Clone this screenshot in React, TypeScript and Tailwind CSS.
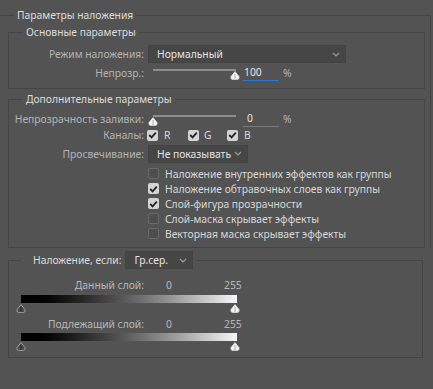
import React from "react";

const Chevron = () => (
  <svg width="8" height="5" viewBox="0 0 8 5" className="shrink-0">
    <path d="M1 1 L4 4 L7 1" stroke="#9a9a9a" strokeWidth="1.2" fill="none" />
  </svg>
);

const Select = ({ value, className }: { value: string; className: string }) => (
  <div
    className={`h-[18px] flex items-center justify-between bg-[#464646] border border-[#434343] pl-[8px] pr-[5px] text-[#e4e4e4] whitespace-nowrap ${className}`}
  >
    <span>{value}</span>
    <Chevron />
  </div>
);

const Thumb = ({ dark = false }: { dark?: boolean }) => (
  <svg width="10" height="9" viewBox="0 0 10 9">
    <path
      d="M5 0.6 L9 5.6 Q9.6 8.4 7.4 8.4 L2.6 8.4 Q0.4 8.4 1 5.6 Z"
      fill={dark ? "#4a4a4a" : "#f4f4f4"}
      stroke={dark ? "#b4b4b4" : "#e0e0e0"}
      strokeWidth="0.8"
    />
    <line x1="5" y1="3" x2="5" y2="8" stroke={dark ? "#1e1e1e" : "#9a9a9a"} strokeWidth="0.8" />
  </svg>
);

const Check = ({ checked }: { checked: boolean }) =>
  checked ? (
    <span className="w-[11px] h-[11px] shrink-0 rounded-[2px] bg-[#d4d4d4] flex items-center justify-center">
      <svg width="9" height="8" viewBox="0 0 9 8">
        <path d="M1.2 4 L3.6 6.4 L7.8 1.6" stroke="#262626" strokeWidth="1.8" fill="none" />
      </svg>
    </span>
  ) : (
    <span className="w-[11px] h-[11px] shrink-0 rounded-[2px] border border-[#6a6a6a] bg-[#4e4e4e]" />
  );

const SliderRow = ({
  label,
  value,
  thumbLeft,
  active,
  className,
}: {
  label: string;
  value: string;
  thumbLeft: string;
  active?: boolean;
  className: string;
}) => (
  <div className={`flex items-center h-[16px] ${className}`}>
    <span className="w-[135px] text-right text-[#b4b4b4] whitespace-nowrap">{label}</span>
    <div className="relative ml-[9px] w-[83px] h-[16px]">
      <div className="absolute top-[4px] left-0 right-0 h-[2px] bg-[#8c8c8c]" />
      <div className={`absolute top-[6px] ${thumbLeft} flex`}>
        <Thumb />
      </div>
    </div>
    <div
      className={`ml-[7px] w-[36px] h-[16px] border-b ${
        active ? "border-[#2a78d6] pl-[1px]" : "border-[#7a7a7a] pl-[4px]"
      } text-[#e4e4e4] leading-[15px]`}
    >
      {value}
    </div>
    <span className="ml-[4px] text-[#b4b4b4]">%</span>
  </div>
);

const GradientBar = ({ className }: { className: string }) => (
  <div className={`ml-[11px] w-[218px] ${className}`}>
    <div className="h-[10px] border border-[#555] bg-gradient-to-r from-black to-[#f6f6f6]" />
    <div className="flex justify-between mx-[-4px] h-[9px]">
      <Thumb dark />
      <div className="mr-[2px] flex">
        <Thumb />
      </div>
    </div>
  </div>
);

const options: { label: string; checked: boolean }[] = [
  { label: "Наложение внутренних эффектов как группы", checked: false },
  { label: "Наложение обтравочных слоев как группы", checked: true },
  { label: "Слой-фигура прозрачности", checked: true },
  { label: "Слой-маска скрывает эффекты", checked: false },
  { label: "Векторная маска скрывает эффекты", checked: false },
];

export default function App() {
  return (
    <div
      className="w-[433px] h-[389px] bg-[#535353] overflow-hidden text-[10.3px] leading-[16px] text-[#d8d8d8]"
      style={{ fontFamily: '"Noto Sans", "Open Sans", sans-serif' }}
    >
      <fieldset className="mt-[7px] w-[431px] border-t border-r border-[#454545]">
        <legend className="ml-[14px] px-[3px] text-[#dcdcdc]">Параметры наложения</legend>

        <fieldset className="mt-[1px] ml-[8px] w-[417px] border border-[#454545]">
          <legend className="ml-[14px] px-[3px] text-[#dcdcdc]">Основные параметры</legend>
          <div className="pt-[5px] pb-[7px]">
            <div className="flex items-center h-[18px]">
              <span className="w-[135px] text-right text-[#b4b4b4]">Режим наложения:</span>
              <Select className="ml-[4px] w-[198px]" value="Нормальный" />
            </div>
            <SliderRow className="mt-[2px]" label="Непрозр.:" value="100" thumbLeft="left-[77px]" active />
          </div>
        </fieldset>

        <fieldset className="mt-[2px] ml-[8px] w-[417px] border border-[#454545]">
          <legend className="ml-[14px] px-[3px] text-[#dcdcdc]">Дополнительные параметры</legend>
          <div className="pt-[4px] pb-[6px]">
            <SliderRow className="" label="Непрозрачность заливки:" value="0" thumbLeft="left-[-5px]" />
            <div className="flex items-center h-[16px]">
              <span className="w-[135px] text-right text-[#b4b4b4]">Каналы:</span>
              <div className="ml-[3px] flex items-center">
                <Check checked />
                <span className="ml-[6px] w-[24px] text-[#d8d8d8]">R</span>
                <Check checked />
                <span className="ml-[5px] w-[23px] text-[#d8d8d8]">G</span>
                <Check checked />
                <span className="ml-[6px] text-[#d8d8d8]">B</span>
              </div>
            </div>
            <div className="mt-[2px] flex items-center h-[17px]">
              <span className="w-[135px] text-right text-[#b4b4b4]">Просвечивание:</span>
              <Select className="ml-[4px] w-[100px] h-[17px]" value="Не показывать" />
            </div>
            <div className="mt-[4px] ml-[139px] flex flex-col">
              {options.map((o) => (
                <div key={o.label} className="flex items-center h-[15px]">
                  <Check checked={o.checked} />
                  <span className="ml-[6px] text-[#d8d8d8] whitespace-nowrap">{o.label}</span>
                </div>
              ))}
            </div>
          </div>
        </fieldset>
      </fieldset>

      <fieldset className="mt-[3px] ml-[8px] w-[415px] border border-[#454545]">
        <legend className="ml-[12px] pl-[12px] pr-[3px]">
          <div className="flex items-center h-[18px]">
            <span className="text-[#dcdcdc]">Наложение, если:</span>
            <Select className="ml-[4px] w-[68px]" value="Гр.сер." />
          </div>
        </legend>
        <div className="pt-[9px] pb-[6px]">
          <div className="flex items-center h-[14px] text-[#b8b8b8]">
            <span className="w-[135px] text-right">Данный слой:</span>
            <span className="ml-[22px] w-[58px]">0</span>
            <span>255</span>
          </div>
          <GradientBar className="mt-[2px]" />
          <div className="mt-[4px] flex items-center h-[14px] text-[#b8b8b8]">
            <span className="w-[135px] text-right">Подлежащий слой:</span>
            <span className="ml-[22px] w-[58px]">0</span>
            <span>255</span>
          </div>
          <GradientBar className="mt-[1px]" />
        </div>
      </fieldset>
    </div>
  );
}
